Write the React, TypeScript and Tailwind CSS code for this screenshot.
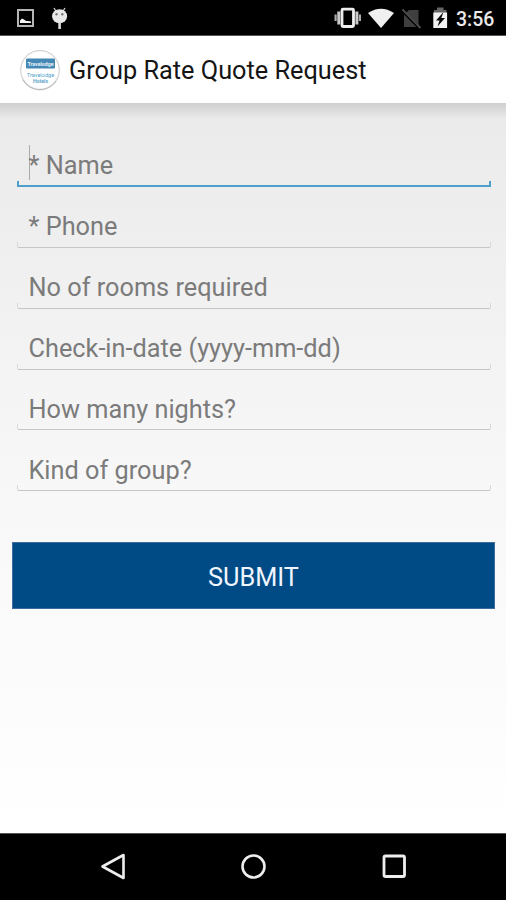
import { useState } from "react";
import clsx from "clsx";

const FIELDS = [
  "* Name",
  "* Phone",
  "No of rooms required",
  "Check-in-date (yyyy-mm-dd)",
  "How many nights?",
  "Kind of group?",
];

function StatusBar() {
  return (
    <div className="flex h-[36px] shrink-0 items-start border-b border-[#555] bg-black text-white">
      {/* Notifications */}
      <svg className="ml-[17px] h-[35px] w-[18px]" viewBox="17 0 18 35">
        <rect x="18" y="10" width="15" height="16" fill="none" stroke="#b5b5b5" strokeWidth="2" />
        <path d="M20 23v-2.500l2-2 2 1 2 1.500 2 0 3 .500v1.500z" fill="#f5f5f5" />
      </svg>
      <svg className="ml-[16px] h-[35px] w-[18px]" viewBox="51 0 18 35">
        <path d="M54 8l2.500 4M65 8l-2.500 4" stroke="#d0d0d0" strokeWidth="1.300" />
        <ellipse cx="59.600" cy="16.200" rx="7.500" ry="7" fill="#e8e8e8" />
        <path d="M59.600 22v7" stroke="#ddd" strokeWidth="2.600" />
        <circle cx="56.500" cy="14.200" r="1.200" fill="#777" />
        <circle cx="62.300" cy="14.200" r="1.200" fill="#777" />
      </svg>

      {/* System icons */}
      <svg className="ml-auto h-[35px] w-[28px]" viewBox="334 0 28 35">
        <rect x="342" y="9.200" width="11.500" height="17.300" rx="1" fill="none" stroke="#eee" strokeWidth="2.800" />
        <path d="M338.800 11.500v13M356.900 11.500v13" stroke="#c8c8c8" strokeWidth="3" />
        <path d="M335.600 14.500v6.500M359.900 14.500v6.500" stroke="#aaa" strokeWidth="2.200" />
      </svg>
      <svg className="ml-[6px] h-[35px] w-[26px]" viewBox="368 0 26 35">
        <path d="M368 13Q381 4.500 394 13L381 28z" fill="#f0f0f0" />
      </svg>
      <svg className="ml-[8px] h-[35px] w-[20px]" viewBox="402 0 20 35">
        <path d="M409 10h9.500v17H404V15z" fill="#3f3f3f" />
        <path d="M402 10.500l17.500 17.500" stroke="#000" strokeWidth="3" />
        <path d="M402.500 9.500l18 18.500" stroke="#4b4b4b" strokeWidth="1.800" />
      </svg>
      <svg className="ml-[11px] h-[35px] w-[15px]" viewBox="433 0 15 35">
        <path d="M437 7.500h6.500V10h-6.500zM434 10h12.500v3H434z" fill="#666" />
        <path d="M433.300 12.500h13.800V28h-13.800z" fill="#f2f2f2" />
        <path d="M443.500 12l-7.500 8.500h3.500l-2 6 7.500-8.500h-3.700z" fill="#080808" />
      </svg>
      <span className="mt-[10px] mr-[12px] ml-[8px] w-[38px] text-[19.500px] leading-none font-medium whitespace-nowrap text-[#e9e9e9]">
        3:56
      </span>
    </div>
  );
}

function Logo() {
  return (
    <svg className="h-[42px] w-[42px] shrink-0" viewBox="0 0 42 42">
      <circle cx="21" cy="21" r="19.300" fill="#fff" stroke="#d2d2d2" strokeWidth="1.200" />
      <path d="M4 31a19.300 19.300 0 0 0 33 1" fill="none" stroke="#999" strokeWidth="1" opacity=".6" />
      <rect x="7" y="9.500" width="29" height="10" rx="1" fill="#4488b5" />
      <text x="21.500" y="16.600" textAnchor="middle" fontSize="5.200" fontWeight="700" fill="#e9f3f9">Travelodge</text>
      <text x="21.500" y="28.300" textAnchor="middle" fontSize="5.600" fill="#4f9fc9">Travelodge</text>
      <text x="21.500" y="34" textAnchor="middle" fontSize="5.200" fontWeight="700" fill="#5ba4cb">Hotels</text>
    </svg>
  );
}

interface FieldProps {
  label: string;
  active: boolean;
  onSelect: () => void;
}

function Field({ label, active, onSelect }: FieldProps) {
  return (
    <div className="flex h-[60.9px] flex-col justify-end" onClick={onSelect}>
      <div className="flex h-[36px] items-center pl-[12px]">
        <span
          className={clsx(
            "flex h-[35px] items-center border-l pt-[6.500px] text-[25.3px] leading-none whitespace-nowrap text-[#7b7b7b]",
            active ? "border-[#aaa]" : "border-transparent"
          )}
        >
          <span className="-ml-px">{label}</span>
        </span>
      </div>
      {/* Holo style bracket under the text */}
      <div
        className={clsx(
          "h-[6px]",
          active
            ? "border-x-2 border-b-2 border-[#4b9fca]"
            : "rounded-b-[2px] border-x border-b border-x-[#d8d8d8] border-b-[#c6c6c6]"
        )}
      />
    </div>
  );
}

function NavBar() {
  return (
    <div className="flex h-[67px] shrink-0 items-center justify-between border-t border-[#555] bg-black px-[99px]">
      <svg className="h-[30px] w-[28px]" viewBox="0 0 28 30" fill="none" stroke="#eee" strokeWidth="2.600" strokeLinejoin="round">
        <path d="M3.500 14.500L24.500 3v23z" />
      </svg>
      <svg className="h-[30px] w-[28px]" viewBox="0 0 28 30" fill="none" stroke="#eee" strokeWidth="2.600">
        <circle cx="14.500" cy="14.500" r="11" />
      </svg>
      <svg className="h-[30px] w-[28px]" viewBox="0 0 28 30" fill="none" stroke="#eee" strokeWidth="2.800">
        <rect x="5" y="4" width="20.500" height="20.500" rx="1.500" />
      </svg>
    </div>
  );
}

export default function App() {
  const [active, setActive] = useState(0);

  return (
    <div className="flex h-[900px] w-[506px] flex-col overflow-hidden bg-black font-['Roboto',sans-serif]">
      <StatusBar />

      <header className="flex h-[67px] shrink-0 items-center bg-white pl-[19px]">
        <Logo />
        <h1 className="ml-[8px] pt-[2px] text-[25.3px] leading-none whitespace-nowrap text-[#151515]">
          Group Rate Quote Request
        </h1>
      </header>

      <main className="flex flex-1 flex-col bg-linear-to-b from-[#eaeaea] via-[#f7f7f7] to-white">
        <div className="h-[16px] shrink-0 bg-linear-to-b from-[#cfcfcf] to-transparent" />
        <div className="mt-[7px] flex h-[366px] shrink-0 flex-col pr-[15px] pl-[16.500px]">
          {FIELDS.map((label, i) => (
            <Field key={label} label={label} active={i === active} onSelect={() => setActive(i)} />
          ))}
        </div>
        <button className="mt-[50px] mr-[11px] ml-[12px] h-[67px] border border-[#3c6c9d] bg-[#004b85] pt-[4px] text-[25.3px] leading-none text-[#f0f5ff]">
          SUBMIT
        </button>
      </main>

      <NavBar />
    </div>
  );
}
